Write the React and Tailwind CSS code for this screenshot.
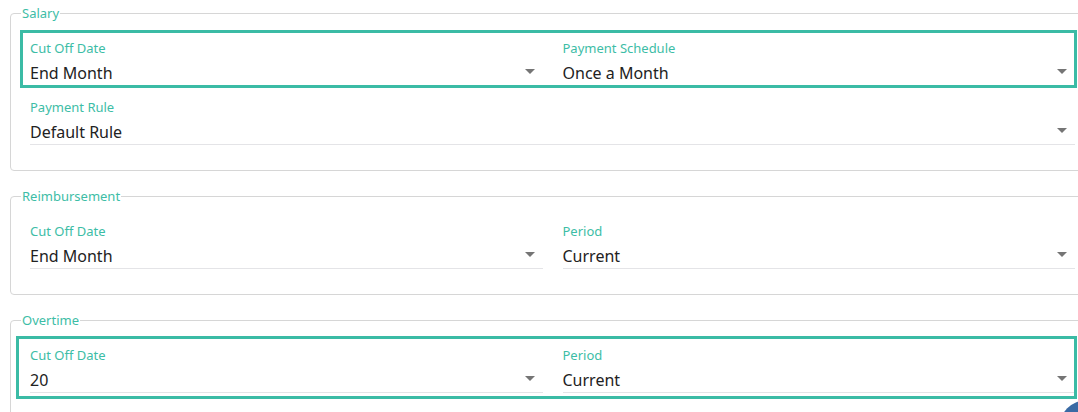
import React from 'react'

const teal = 'text-[#3dbda6]'

function Arrow() {
  return (
    <svg className="absolute right-[8px] top-[8px]" width="10" height="5" viewBox="0 0 10 5">
      <polygon points="0,0 10,0 5,5" fill="#757575" />
    </svg>
  )
}

function Field({ label, value, full }) {
  return (
    <div className={full ? 'col-span-2' : ''}>
      <div className={`text-[13px] leading-[18px] ${teal}`}>{label}</div>
      <div className="relative mt-[4px] h-[25px] border-b border-[#e4e4e7] text-[16px] leading-[24px] text-[#222]">
        {value}
        <Arrow />
      </div>
    </div>
  )
}

function Section({ title, children }) {
  return (
    <fieldset className="w-[1085px] rounded-[4px] border border-[#d6d6d6] pl-[19px] pr-[19px] pt-[17px] pb-[25px]">
      <legend className={`ml-[-9px] px-[1px] text-[13px] leading-[18px] ${teal}`}>{title}</legend>
      {children}
    </fieldset>
  )
}

export default function App() {
  return (
    <div
      className="w-full overflow-hidden bg-white pl-[10px] pt-[4px]"
      style={{ fontFamily: '"Noto Sans", sans-serif' }}
    >
      <div className="flex flex-col gap-[16px]">
        <Section title="Salary">
          <div className="flex flex-col gap-[12px]">
            <div className="relative grid grid-cols-2 gap-x-5">
              <Field label="Cut Off Date" value="End Month" />
              <Field label="Payment Schedule" value="Once a Month" />
              {/* highlight */}
              <div className="pointer-events-none absolute z-10 left-[-10px] right-[-2px] top-[-9px] bottom-[-2px] border-[3px] border-[#3bbba5]" />
            </div>
            <div className="grid grid-cols-2 gap-x-5">
              <Field label="Payment Rule" value="Default Rule" full />
            </div>
          </div>
        </Section>

        <Section title="Reimbursement">
          <div className="grid grid-cols-2 gap-x-5">
            <Field label="Cut Off Date" value="End Month" />
            <Field label="Period" value="Current" />
          </div>
        </Section>

        <Section title="Overtime">
          <div className="relative grid grid-cols-2 gap-x-5">
            <Field label="Cut Off Date" value="20" />
            <Field label="Period" value="Current" />
            {/* highlight */}
            <div className="pointer-events-none absolute z-10 left-[-14px] right-[-2px] top-[-10px] bottom-[-6px] border-[3px] border-[#3bbba5]" />
          </div>
        </Section>
      </div>

      <div className="fixed right-[-37px] bottom-[-44px] h-14 w-14 rounded-full bg-[#3a6aa4]" />
    </div>
  )
}
